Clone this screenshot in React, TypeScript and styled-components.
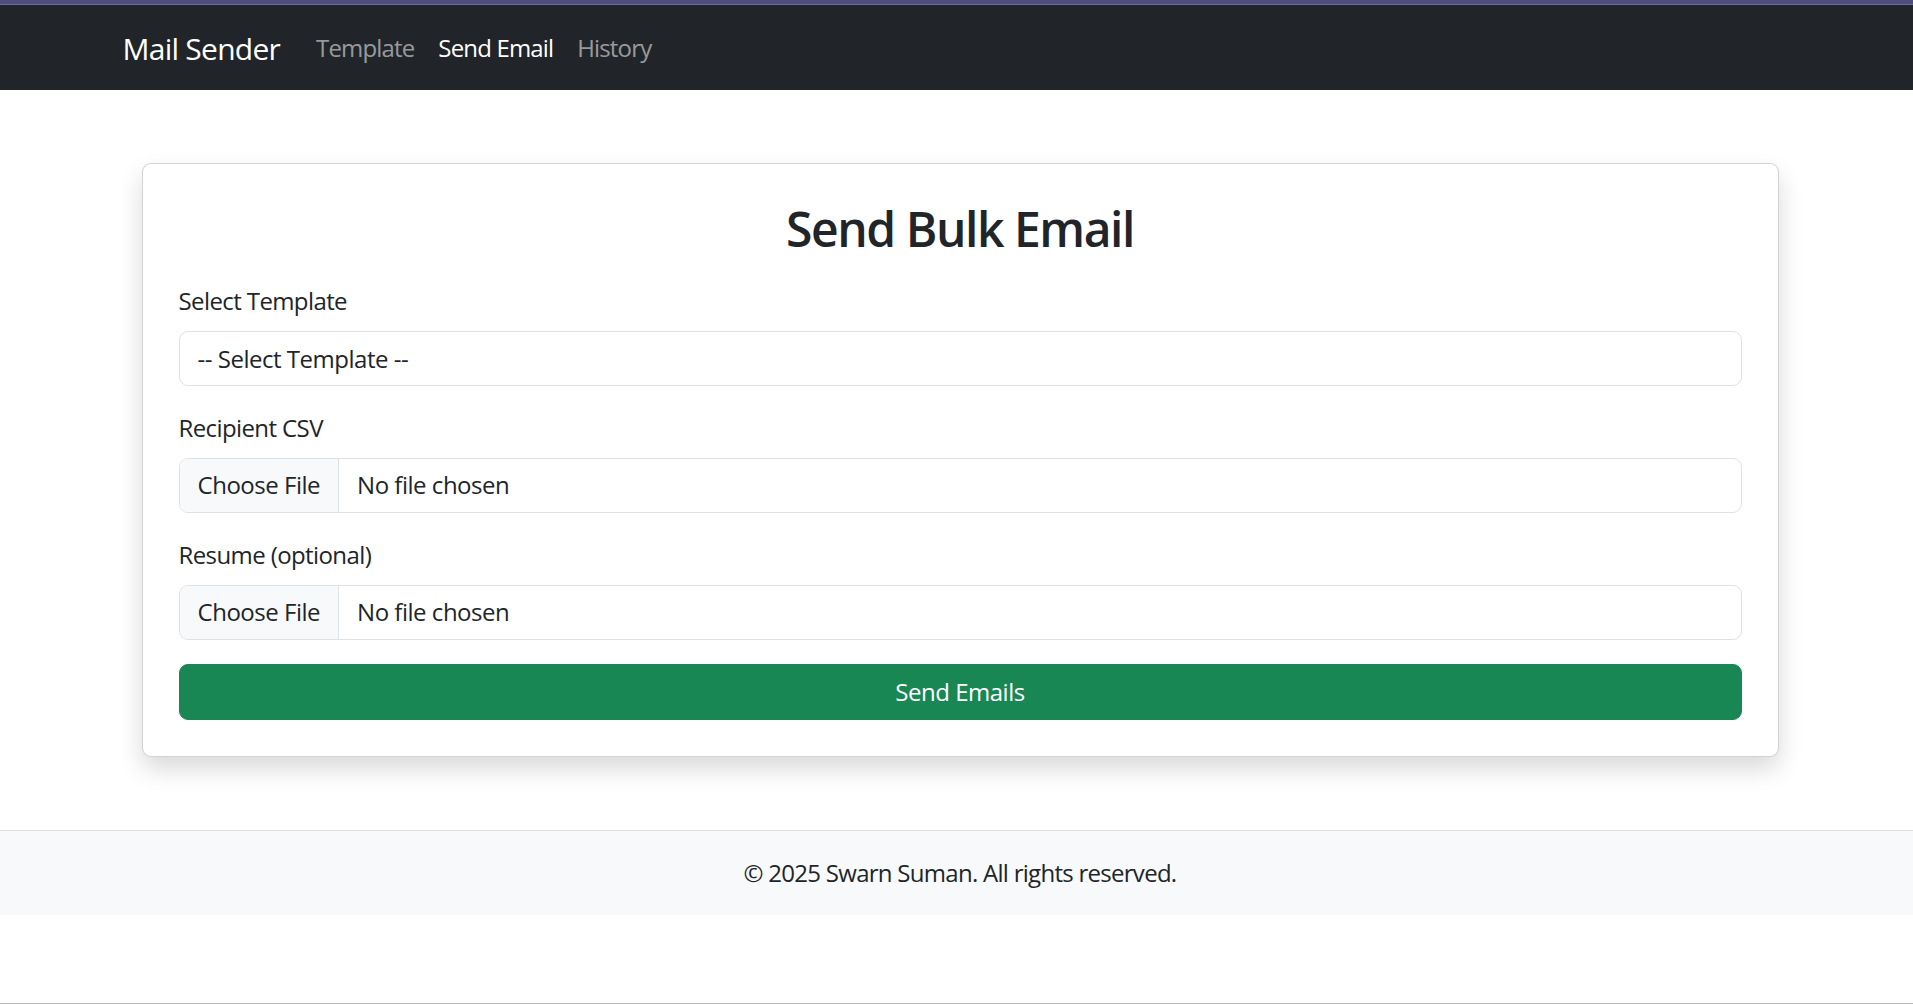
import React from "react";
import styled, { createGlobalStyle } from "styled-components";

const GlobalStyle = createGlobalStyle`
  * { box-sizing: border-box; }
  html, body { margin: 0; padding: 0; }
  body {
    font-family: "Open Sans", "Noto Sans", "Liberation Sans", sans-serif;
    font-size: 24px;
    line-height: 1.5;
    color: #212529;
    background: #ffffff;
  }
`;

const Page = styled.div`
  min-height: 100vh;
  display: flex;
  flex-direction: column;
  border-bottom: 1px solid #b9b9c0;
`;

const TopStrip = styled.div`
  height: 5px;
  background: linear-gradient(#4d4e7d 0 80%, #6c6d98 80% 100%);
`;

const Navbar = styled.nav`
  background: #212529;
  padding: 13px 0 12px;
`;

const NavContainer = styled.div`
  width: 1710px;
  margin: 0 auto;
  padding: 0 18px 0 21px;
  display: flex;
  align-items: center;
`;

const Brand = styled.a`
  font-size: 30px;
  line-height: 45px;
  padding: 7px 0;
  margin-right: 24px;
  color: #ffffff;
  text-decoration: none;
  letter-spacing: -0.025em;
`;

const NavList = styled.div`
  display: flex;
  align-items: center;
`;

const NavLink = styled.a<{ $active?: boolean }>`
  padding: 12px;
  line-height: 36px;
  font-size: 24px;
  color: ${(p) => (p.$active ? "#ffffff" : "rgba(255,255,255,0.55)")};
  text-decoration: none;
  letter-spacing: -0.035em;
`;

const Main = styled.main`
  padding: 73px 0 73px 7px;
`;

const Card = styled.div`
  width: 1637px;
  margin: 0 auto;
  background: #ffffff;
  border: 1px solid rgba(0, 0, 0, 0.175);
  border-radius: 9px;
  box-shadow: 0 12px 24px rgba(0, 0, 0, 0.15);
  padding: 36px;
`;

const Title = styled.h2`
  margin: 0 0 25px;
  text-align: center;
  font-size: 48px;
  font-weight: 600;
  line-height: 1.2;
  letter-spacing: -0.03em;
`;

const Form = styled.form`
  display: flex;
  flex-direction: column;
`;

const Group = styled.div`
  margin-bottom: 24px;
  display: flex;
  flex-direction: column;
`;

const Label = styled.label`
  display: block;
  margin-bottom: 12px;
  font-size: 24px;
  line-height: 36px;
  letter-spacing: -0.025em;
`;

const Select = styled.select`
  appearance: none;
  -webkit-appearance: none;
  width: 100%;
  height: 55px;
  padding: 0 18px;
  font-family: inherit;
  font-size: 24px;
  letter-spacing: -0.02em;
  color: #212529;
  background: #ffffff;
  border: 1px solid #dee2e6;
  border-radius: 9px;
  outline: none;
`;

const FileField = styled.label`
  display: flex;
  align-items: stretch;
  height: 55px;
  border: 1px solid #dee2e6;
  border-radius: 9px;
  overflow: hidden;
  background: #ffffff;
  cursor: pointer;
`;

const FileButton = styled.span`
  display: flex;
  align-items: center;
  padding: 0 18px;
  background: #f8f9fa;
  border-right: 1px solid #dee2e6;
  letter-spacing: -0.02em;
`;

const FileName = styled.span`
  display: flex;
  align-items: center;
  padding: 0 18px;
  letter-spacing: -0.02em;
`;

const HiddenInput = styled.input`
  display: none;
`;

const SubmitButton = styled.button`
  width: 100%;
  height: 56px;
  border: 1px solid #198754;
  border-radius: 9px;
  background: #198754;
  color: #ffffff;
  font-family: inherit;
  font-size: 24px;
  letter-spacing: -0.02em;
  cursor: pointer;
`;

const Footer = styled.footer`
  background: #f8f9fa;
  border-top: 1px solid #dee2e6;
  padding: 24px 0 24px 7px;
  text-align: center;
  line-height: 36px;
  letter-spacing: -0.03em;
`;

function FileInput({ id }: { id: string }) {
  return (
    <FileField htmlFor={id}>
      <FileButton>Choose File</FileButton>
      <FileName>No file chosen</FileName>
      <HiddenInput id={id} type="file" />
    </FileField>
  );
}

export default function App() {
  return (
    <Page>
      <GlobalStyle />
      <TopStrip />
      <Navbar>
        <NavContainer>
          <Brand href="#">Mail Sender</Brand>
          <NavList>
            <NavLink href="#">Template</NavLink>
            <NavLink href="#" $active>
              Send Email
            </NavLink>
            <NavLink href="#">History</NavLink>
          </NavList>
        </NavContainer>
      </Navbar>
      <Main>
        <Card>
          <Title>Send Bulk Email</Title>
          <Form onSubmit={(e) => e.preventDefault()}>
            <Group>
              <Label htmlFor="template">Select Template</Label>
              <Select id="template" defaultValue="">
                <option value="">-- Select Template --</option>
              </Select>
            </Group>
            <Group>
              <Label htmlFor="csv">Recipient CSV</Label>
              <FileInput id="csv" />
            </Group>
            <Group>
              <Label htmlFor="resume">Resume (optional)</Label>
              <FileInput id="resume" />
            </Group>
            <SubmitButton type="submit">Send Emails</SubmitButton>
          </Form>
        </Card>
      </Main>
      <Footer>© 2025 Swarn Suman. All rights reserved.</Footer>
    </Page>
  );
}
